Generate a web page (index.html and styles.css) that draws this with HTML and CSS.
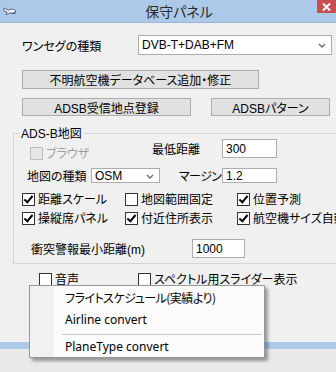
FILE: index.html
```html
<!DOCTYPE html>
<html>
<head>
  <link rel="stylesheet" href="styles.css">
</head>
<body>
  <div class="window">
    <div class="titlebar">
      <svg class="app-icon" width="14" height="12" viewBox="0 0 14 12">
        <path d="M1 3 L5 5 L10 4 L13 6 L11 8 L6 8 L3 10 L4 7 L1 6 Z" fill="#eef2f8" stroke="#4a5670" stroke-width="0.8"/>
        <path d="M6 8 L11 8 L13 6 L12 9 Z" fill="#2c3a7a"/>
      </svg>
      <span class="title">保守パネル</span>
      <button class="close-btn">
        <svg width="9" height="8" viewBox="0 0 9 8"><path d="M1 0.5 L8 7.5 M8 0.5 L1 7.5" stroke="#fff" stroke-width="2"/></svg>
      </button>
    </div>

    <div class="row row-oneseg">
      <span class="oneseg-label">ワンセグの種類</span>
      <div class="select select-wide">
        <span class="latin">DVB-T+DAB+FM</span>
        <svg class="chevron" width="8" height="5" viewBox="0 0 8 5"><path d="M1 1 L4 4 L7 1" fill="none" stroke="#6d6d6d" stroke-width="1.4"/></svg>
      </div>
    </div>

    <button class="btn btn-db">不明航空機データベース追加・修正</button>

    <div class="row btn-row">
      <button class="btn btn-site"><span class="latin">ADSB</span>受信地点登録</button>
      <button class="btn btn-pattern"><span class="latin">ADSB</span>パターン</button>
    </div>

    <fieldset class="group">
      <legend><span class="latin">ADS-B</span>地図</legend>

      <div class="row row-a">
        <label class="check disabled browser"><span class="box"></span>ブラウザ</label>
        <span class="min-label">最低距離</span>
        <div class="input input-small latin">300</div>
      </div>

      <div class="row row-b">
        <span class="map-label">地図の種類</span>
        <div class="select select-osm">
          <span class="latin">OSM</span>
          <svg class="chevron" width="8" height="5" viewBox="0 0 8 5"><path d="M1 1 L4 4 L7 1" fill="none" stroke="#6d6d6d" stroke-width="1.4"/></svg>
        </div>
        <span class="margin-label">マージン</span>
        <div class="input input-small input-short latin">1.2</div>
      </div>

      <div class="check-grid">
        <label class="check checked"><span class="box"></span>距離スケール</label>
        <label class="check"><span class="box"></span>地図範囲固定</label>
        <label class="check checked"><span class="box"></span>位置予測</label>
        <label class="check checked"><span class="box"></span>操縦席パネル</label>
        <label class="check checked"><span class="box"></span>付近住所表示</label>
        <label class="check checked"><span class="box"></span>航空機サイズ自動</label>
      </div>

      <div class="row row-e">
        <span class="warn-label">衝突警報最小距離<span class="latin">(m)</span></span>
        <div class="input input-warn latin">1000</div>
      </div>
    </fieldset>

    <div class="row row-bottom">
      <label class="check sound"><span class="box"></span>音声</label>
      <label class="check"><span class="box"></span>スペクトル用スライダー表示</label>
    </div>
  </div>

  <div class="context-menu">
    <div class="menu-item">フライトスケジュール(実績より)</div>
    <div class="menu-item latin-menu">Airline convert</div>
    <div class="menu-sep"></div>
    <div class="menu-item latin-menu">PlaneType convert</div>
  </div>
</body>
</html>
```

FILE: styles.css
```css
body {
  margin: 0;
  width: 336px;
  height: 372px;
  overflow: hidden;
  position: relative;
  background: #e9e9e9;
  font-family: "Noto Sans CJK JP", "Liberation Sans", sans-serif;
  font-size: 12px;
  font-feature-settings: "palt";
  color: #000;
  white-space: nowrap;
}

.latin {
  font-family: "Liberation Sans", "Noto Sans CJK JP", sans-serif;
}

.window {
  height: 342px;
  background: #f0f0f0;
  border-bottom: 7px solid #acc9e9;
  overflow: hidden;
}

/* title bar */
.titlebar {
  height: 22px;
  background: #acc9e9;
  border-bottom: 1px solid #97b6d8;
  display: flex;
  align-items: flex-start;
  position: relative;
}

.app-icon {
  margin: 5px 0 0 3px;
}

.title {
  flex: 1;
  text-align: center;
  font-size: 14px;
  line-height: 22px;
  color: #2b2b2b;
  padding-left: 24px;
}

.close-btn {
  width: 19px;
  height: 13px;
  padding: 0;
  border: none;
  background: #c74f4f;
  display: flex;
  align-items: center;
  justify-content: center;
}

.row {
  display: flex;
  align-items: center;
}

/* top controls */
.row-oneseg {
  margin-top: 12px;
  height: 20px;
  padding-left: 22px;
}

.oneseg-label {
  width: 116px;
}

.select {
  box-sizing: border-box;
  background: #fff;
  border: 1px solid #acacac;
  display: flex;
  align-items: center;
  justify-content: space-between;
  padding: 0 5px 0 3px;
}

.select-wide {
  width: 194px;
  height: 20px;
  font-size: 12px;
}

.chevron {
  margin-top: 1px;
}

.btn {
  box-sizing: border-box;
  background: #e1e1e1;
  border: 1px solid #adadad;
  font-family: inherit;
  font-size: 12px;
  font-feature-settings: "palt";
  padding: 0;
  color: #000;
}

.btn-db {
  display: block;
  margin: 15px 0 0 22px;
  width: 237px;
  height: 19px;
}

.btn-row {
  margin-top: 9px;
  padding-left: 22px;
  gap: 20px;
}

.btn-site {
  width: 169px;
  height: 18px;
}

.btn-pattern {
  width: 119px;
  height: 18px;
}

/* group box */
.group {
  margin: 10px 0 0 13px;
  width: 340px;
  padding: 0 0 5px 0;
  border: 1px solid #d5d5d5;
  box-sizing: border-box;
}

.group legend {
  margin-left: 5px;
  padding: 0 2px;
  line-height: 14px;
}

.row-a {
  margin-top: -2px;
  height: 19px;
  padding-left: 16px;
}

.browser {
  width: 122px;
  align-self: flex-end;
  margin-bottom: -2px;
}

.min-label {
  width: 70px;
}

.input {
  box-sizing: border-box;
  background: #fff;
  border: 1px solid #abadb3;
  padding-left: 3px;
  display: flex;
  align-items: center;
  font-size: 12px;
}

.input-small {
  width: 55px;
  height: 19px;
}

.row-b {
  margin-top: 10px;
  height: 15px;
  padding-left: 13px;
}

.map-label {
  width: 64px;
}

.select-osm {
  width: 69px;
  height: 15px;
}

.margin-label {
  margin-left: 19px;
  width: 43px;
  letter-spacing: -0.6px;
}

.input-short {
  height: 15px;
}

.check-grid {
  margin-top: 9px;
  padding-left: 8px;
  display: grid;
  grid-template-columns: 103px 112px auto;
  grid-auto-rows: 14px;
  row-gap: 5px;
}

.check {
  display: flex;
  align-items: center;
  gap: 3px;
  line-height: 14px;
}

.box {
  box-sizing: border-box;
  width: 13px;
  height: 13px;
  background: #fff;
  border: 1px solid #333;
  position: relative;
  flex-shrink: 0;
}

.check.checked .box:after {
  content: "";
  position: absolute;
  left: 3px;
  top: 0px;
  width: 3px;
  height: 7px;
  border: solid #000;
  border-width: 0 2px 2px 0;
  transform: rotate(40deg);
}

.check.disabled {
  color: #a0a0a0;
}

.check.disabled .box {
  background: #e6e6e6;
  border-color: #bcbcbc;
}

.row-e {
  margin-top: 14px;
  height: 19px;
  padding-left: 17px;
}

.warn-label {
  width: 161px;
}

.input-warn {
  width: 53px;
  height: 19px;
}

.row-bottom {
  margin-top: 8px;
  height: 14px;
  padding-left: 39px;
}

.sound {
  width: 99px;
}

/* context menu */
.context-menu {
  position: absolute;
  left: 29px;
  top: 285px;
  width: 236px;
  box-sizing: border-box;
  border: 1px solid #979797;
  padding: 1px 0 0 0;
  background: linear-gradient(90deg, #f1f1f1 0, #f1f1f1 24px, #fcfcfc 24px);
  box-shadow: 3px 3px 3px rgba(0, 0, 0, 0.35);
}

.menu-item {
  height: 22px;
  line-height: 22px;
  padding-left: 35px;
  font-size: 12px;
  letter-spacing: -0.5px;
}

.menu-item:last-child {
  height: 20px;
  line-height: 20px;
}

.latin-menu {
  font-family: "Noto Sans", "Liberation Sans", sans-serif;
  font-size: 12px;
  letter-spacing: 0;
}

.menu-sep {
  height: 1px;
  margin: 3px 2px 2px 32px;
  background: #c8c8c8;
}
```
